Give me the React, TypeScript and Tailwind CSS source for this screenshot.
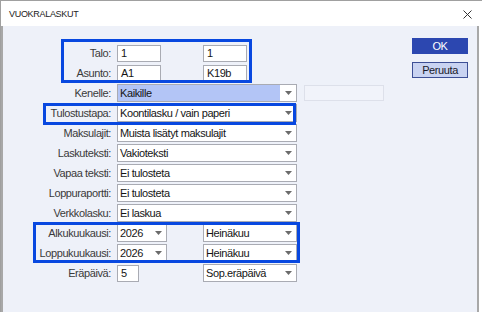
import React from "react";

const Arrow = () => (
  <div className="flex w-[16px] h-full items-center justify-center bg-white shrink-0">
    <svg width="7" height="4" viewBox="0 0 7 4">
      <polygon points="0,0 7,0 3.5,4" fill="#6b6b6b" />
    </svg>
  </div>
);

function Sel({ text, w, bg }: { text: string; w: string; bg?: string }) {
  return (
    <div className={`flex h-[18px] ${w} border border-[#a9abb3] ${bg ?? "bg-white"} items-center shrink-0`}>
      <span className="flex-1 pl-[2px] whitespace-nowrap overflow-hidden text-[#151515]">{text}</span>
      <Arrow />
    </div>
  );
}

function Inp({ text, w }: { text: string; w: string }) {
  return (
    <div className={`flex h-[17px] ${w} border border-[#a9abb3] bg-white items-center shrink-0`}>
      <span className="pl-[3px] whitespace-nowrap text-[#151515]">{text}</span>
    </div>
  );
}

function Row({ label, children }: { label: string; children: React.ReactNode }) {
  return (
    <div className="flex h-[20px] items-center">
      <div className="w-[108px] shrink-0 text-right whitespace-nowrap text-[#3a3a3a]">{label}</div>
      <div className="ml-[6px] flex items-center">{children}</div>
    </div>
  );
}

export default function App() {
  return (
    <div className="relative w-[482px] h-[312px] bg-white border-t border-l border-[#a0a0a0] flex flex-col overflow-hidden font-['Liberation_Sans',Arial,sans-serif] text-[11px] tracking-[-0.4px]">
      <div className="h-[25px] flex items-center justify-between pl-[8px] pr-[10px] pt-[3px] shrink-0">
        <span className="text-[9px] tracking-[-0.3px] text-[#222]">VUOKRALASKUT</span>
        <svg width="9" height="9" viewBox="0 0 9 9" className="-mt-[2px]">
          <path d="M0.5 0.5 L8.5 8.5 M8.5 0.5 L0.5 8.5" stroke="#333" strokeWidth="1" />
        </svg>
      </div>
      <div className="flex-1 flex bg-[#eef1f9] border-l-2 border-r-2 border-[#a8a8a8] mr-[3px]">
        <div className="w-[409px] shrink-0 pt-[17px] flex flex-col">
          <Row label="Talo:">
            <Inp text="1" w="w-[44px]" />
            <div className="w-[42px]" />
            <Inp text="1" w="w-[44px]" />
          </Row>
          <Row label="Asunto:">
            <Inp text="A1" w="w-[44px]" />
            <div className="w-[42px]" />
            <Inp text="K19b" w="w-[44px]" />
          </Row>
          <Row label="Kenelle:">
            <Sel text="Kaikille" w="w-[180px]" bg="bg-[#b3c5f6]" />
            <div className="ml-[7px] w-[80px] h-[16px] border border-[#dde0ea] bg-[#f1f3fa]" />
          </Row>
          <Row label="Tulostustapa:">
            <Sel text="Koontilasku / vain paperi" w="w-[180px]" />
          </Row>
          <Row label="Maksulajit:">
            <Sel text="Muista lisätyt maksulajit" w="w-[180px]" />
          </Row>
          <Row label="Laskuteksti:">
            <Sel text="Vakioteksti" w="w-[180px]" />
          </Row>
          <Row label="Vapaa teksti:">
            <Sel text="Ei tulosteta" w="w-[180px]" />
          </Row>
          <Row label="Loppuraportti:">
            <Sel text="Ei tulosteta" w="w-[180px]" />
          </Row>
          <Row label="Verkkolasku:">
            <Sel text="Ei laskua" w="w-[180px]" />
          </Row>
          <Row label="Alkukuukausi:">
            <Sel text="2026" w="w-[50px]" />
            <div className="w-[36px]" />
            <Sel text="Heinäkuu" w="w-[94px]" />
          </Row>
          <Row label="Loppukuukausi:">
            <Sel text="2026" w="w-[50px]" />
            <div className="w-[36px]" />
            <Sel text="Heinäkuu" w="w-[94px]" />
          </Row>
          <Row label="Eräpäivä:">
            <Inp text="5" w="w-[22px]" />
            <div className="w-[64px]" />
            <Sel text="Sop.eräpäivä" w="w-[94px]" />
          </Row>
        </div>
        <div className="w-[56px] shrink-0 pt-[12px] flex flex-col gap-[8px]">
          <div className="h-[16px] bg-[#2c47b0] text-white flex items-center justify-center">OK</div>
          <div className="h-[16px] bg-[#c9d3f1] border border-[#3d4f95] text-[#1a1a2a] flex items-center justify-center">Peruuta</div>
        </div>
      </div>
      <div className="absolute pointer-events-none border-[3px] border-[#0848e0] left-[60px] top-[38px] w-[191px] h-[44px]" />
      <div className="absolute pointer-events-none border-[3px] border-[#0848e0] left-[42px] top-[102px] w-[253px] h-[22px]" />
      <div className="absolute pointer-events-none border-[3px] border-[#0848e0] left-[32px] top-[221px] w-[267px] h-[41px]" />
    </div>
  );
}
